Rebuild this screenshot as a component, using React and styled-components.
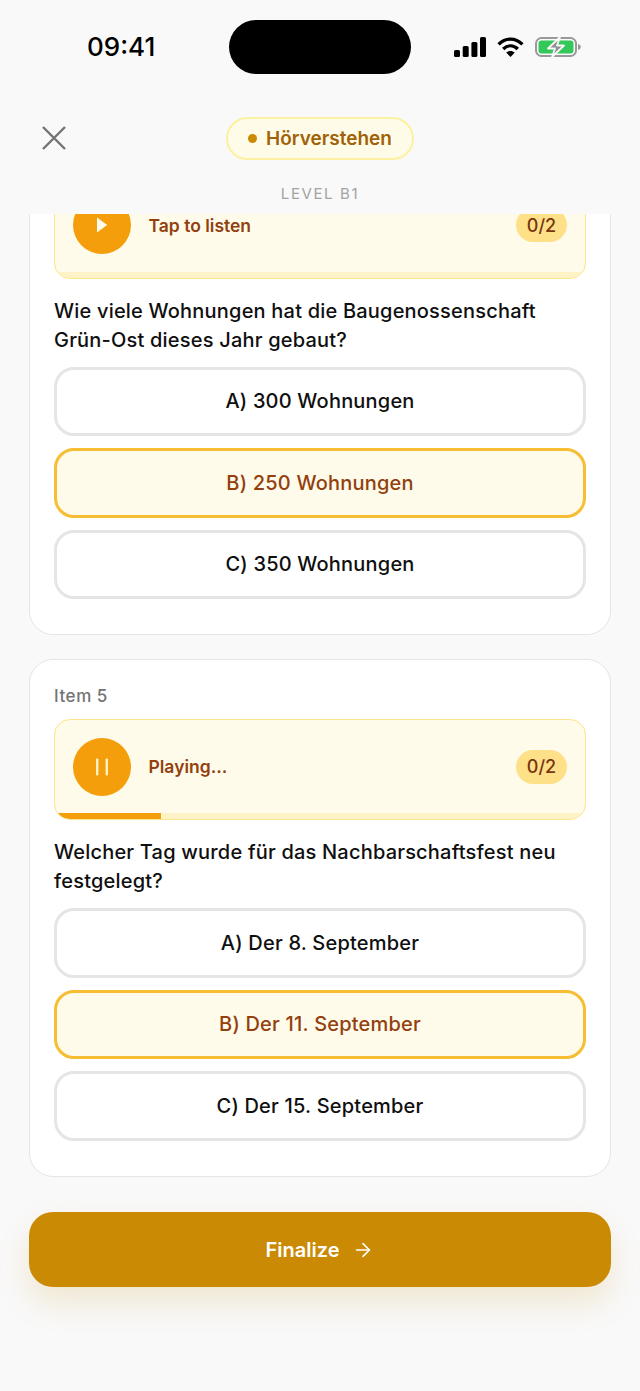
import React, { useLayoutEffect, useRef } from 'react';
import styled, { createGlobalStyle } from 'styled-components';
import { ArrowRight } from 'lucide-react';

const GlobalStyle = createGlobalStyle`
  html, body {
    margin: 0;
    padding: 0;
    background: #f9f9f9;
  }
  * {
    box-sizing: border-box;
  }
`;

const items = [
  {
    label: 'Item 4',
    status: 'Tap to listen',
    playing: false,
    progress: 0,
    question: 'Wie viele Wohnungen hat die Baugenossenschaft Grün-Ost dieses Jahr gebaut?',
    options: ['A) 300 Wohnungen', 'B) 250 Wohnungen', 'C) 350 Wohnungen'],
    selected: 1,
  },
  {
    label: 'Item 5',
    status: 'Playing...',
    playing: true,
    progress: 20,
    question: 'Welcher Tag wurde für das Nachbarschaftsfest neu festgelegt?',
    options: ['A) Der 8. September', 'B) Der 11. September', 'C) Der 15. September'],
    selected: 1,
  },
];

const App = () => {
  const listRef = useRef(null);

  // the reference is photographed part way down the list
  useLayoutEffect(() => {
    listRef.current.scrollTop = 97;
  }, []);

  return (
    <Screen>
      <GlobalStyle />
      <Header>
        <StatusBar>
          <Time>09:41</Time>
          <Island />
          <StatusIcons>
            <svg width="32" height="20" viewBox="0 0 32 20">
              <rect x="0" y="13" width="6" height="7" rx="1.5" fill="#000" />
              <rect x="8.7" y="9" width="6" height="11" rx="1.5" fill="#000" />
              <rect x="17.4" y="5" width="6" height="15" rx="1.5" fill="#000" />
              <rect x="26" y="0" width="6" height="20" rx="1.5" fill="#000" />
            </svg>
            <svg width="27" height="20" viewBox="0 0 27 20" fill="none" stroke="#000" strokeWidth="3.4">
              <path d="M1.6 7.4C8.6 0.4 18.4 0.4 25.4 7.4" />
              <path d="M6.2 12C10.6 7.8 16.4 7.8 20.8 12" />
              <path d="M13.5 20L9.2 15.6C11.6 13.4 15.4 13.4 17.8 15.6Z" fill="#000" stroke="none" />
            </svg>
            <svg width="46" height="22" viewBox="0 0 46 22" fill="none">
              <rect x="1" y="2" width="40" height="18" rx="5.5" stroke="#9a9a9e" strokeWidth="2" />
              <rect x="3.5" y="4.5" width="35" height="13" rx="3" fill="#34c759" />
              <path d="M43 8C45 8.6 45.8 9.6 45.8 11C45.8 12.4 45 13.4 43 14Z" fill="#9a9a9e" />
              <path
                d="M25 1L13 12.5H20L17 21L29 9.5H22Z"
                fill="#8e8e93"
                stroke="#f9f9f9"
                strokeWidth="1.8"
                strokeLinejoin="round"
              />
            </svg>
          </StatusIcons>
        </StatusBar>
        <NavRow>
          <CloseButton aria-label="Close">
            <svg width="24" height="24" viewBox="0 0 24 24" fill="none" stroke="#737373" strokeWidth="2.4">
              <path d="M1 1L23 23M23 1L1 23" />
            </svg>
          </CloseButton>
          <SkillPill>
            <PillDot />
            Hörverstehen
          </SkillPill>
        </NavRow>
        <Level>LEVEL B1</Level>
      </Header>
      <List ref={listRef}>
        {items.map((item) => (
          <Card key={item.label}>
            <ItemLabel>{item.label}</ItemLabel>
            <Player>
              <PlayerRow>
                <RoundButton>
                  {item.playing ? (
                    <svg width="14" height="18" viewBox="0 0 14 18" fill="#fef3c7">
                      <rect x="1" y="0.5" width="2.4" height="17" rx="1" />
                      <rect x="10.6" y="0.5" width="2.4" height="17" rx="1" />
                    </svg>
                  ) : (
                    <svg width="14" height="18" viewBox="0 0 14 18" fill="#fffbeb">
                      <path d="M2 1.5L12.2 9L2 16.5Z" />
                    </svg>
                  )}
                </RoundButton>
                <StatusText>{item.status}</StatusText>
                <Count>0/2</Count>
              </PlayerRow>
              <Track>
                <TrackFill style={{ width: `${item.progress}%` }} />
              </Track>
            </Player>
            <Question>{item.question}</Question>
            <Options>
              {item.options.map((option, i) => (
                <Option key={option} $selected={i === item.selected}>
                  {option}
                </Option>
              ))}
            </Options>
          </Card>
        ))}
        <FinalizeButton>
          Finalize
          <ArrowRight size={22} strokeWidth={1.75} />
        </FinalizeButton>
      </List>
    </Screen>
  );
};

const Screen = styled.div`
  height: 1391px;
  width: 640px;
  display: flex;
  flex-direction: column;
  background: #f9f9f9;
  font-family: 'Inter', 'Liberation Sans', sans-serif;
  overflow: hidden;
`;

const Header = styled.header`
  flex: 0 0 214px;
  background: #f9f9f9;
  display: flex;
  flex-direction: column;
  align-items: center;
`;

const StatusBar = styled.div`
  width: 100%;
  height: 117px;
  padding: 20px 59px 0;
  display: grid;
  grid-template-columns: 1fr 182px 1fr;
  align-items: start;
`;

const Time = styled.span`
  margin: 11px 0 0 28px;
  font-size: 26px;
  line-height: 32px;
  font-weight: 500;
  color: #000;
  white-space: nowrap;
`;

const Island = styled.div`
  height: 54px;
  border-radius: 27px;
  background: #000;
`;

const StatusIcons = styled.div`
  margin-top: 16px;
  display: flex;
  align-items: center;
  justify-content: flex-end;
  gap: 11px;
`;

const NavRow = styled.div`
  position: relative;
  width: 100%;
  display: flex;
  justify-content: center;
`;

const CloseButton = styled.button`
  position: absolute;
  left: 42px;
  top: 9px;
  width: 24px;
  height: 24px;
  padding: 0;
  border: none;
  background: none;
  display: flex;
`;

const SkillPill = styled.div`
  height: 43px;
  padding: 0 20px;
  display: flex;
  align-items: center;
  gap: 9px;
  border-radius: 22px;
  border: 2px solid #fdf0a0;
  background: #fefce8;
  color: #a16207;
  font-size: 19px;
  font-weight: 600;
`;

const PillDot = styled.span`
  width: 9px;
  height: 9px;
  border-radius: 50%;
  background: #ca8a04;
`;

const Level = styled.div`
  margin-top: 25px;
  font-size: 15px;
  line-height: 18px;
  letter-spacing: 1.6px;
  color: #a3a3a3;
`;

const List = styled.main`
  flex: 1;
  min-height: 0;
  overflow-y: auto;
  scrollbar-width: none;
  padding: 0.5px 29px 104px;
  display: flex;
  flex-direction: column;
  gap: 24px;
`;

const Card = styled.section`
  flex: none;
  padding: 24px 24px 35px;
  background: #fff;
  border: 1px solid #e5e5e5;
  border-radius: 24px;
`;

const ItemLabel = styled.div`
  font-size: 17px;
  line-height: 24px;
  font-weight: 500;
  letter-spacing: 0.55px;
  color: #737373;
  margin-bottom: 11px;
`;

const Player = styled.div`
  height: 101px;
  display: flex;
  flex-direction: column;
  background: #fffbeb;
  border: 1px solid #fce58a;
  border-radius: 16px;
  overflow: hidden;
`;

const PlayerRow = styled.div`
  flex: 1;
  padding: 0 18px;
  display: flex;
  align-items: center;
  gap: 17.5px;
`;

const RoundButton = styled.div`
  width: 58px;
  height: 58px;
  border-radius: 50%;
  background: #f59e0b;
  display: flex;
  align-items: center;
  justify-content: center;
`;

const StatusText = styled.span`
  flex: 1;
  font-size: 17.5px;
  font-weight: 600;
  color: #92400e;
`;

const Count = styled.span`
  width: 51px;
  height: 34px;
  border-radius: 17px;
  background: #fde087;
  color: #78350f;
  font-size: 18px;
  font-weight: 500;
  display: flex;
  align-items: center;
  justify-content: center;
`;

const Track = styled.div`
  height: 6px;
  background: #fef3c7;
`;

const TrackFill = styled.div`
  height: 100%;
  background: #f59e0b;
`;

const Question = styled.p`
  margin: 18px 0 12px;
  font-size: 20px;
  line-height: 29px;
  font-weight: 500;
  letter-spacing: 0.2px;
  color: #0f0f0f;
`;

const Options = styled.div`
  display: flex;
  flex-direction: column;
  gap: 12px;
`;

const Option = styled.button`
  height: 69.5px;
  border-radius: 20px;
  border: 3px solid ${(p) => (p.$selected ? '#f7bd33' : '#e5e5e5')};
  background: ${(p) => (p.$selected ? '#fffbeb' : '#fff')};
  color: ${(p) => (p.$selected ? '#92400e' : '#0f0f0f')};
  font-family: inherit;
  font-size: 20px;
  font-weight: 500;
  letter-spacing: 0.2px;
`;

const FinalizeButton = styled.button`
  flex: none;
  height: 75px;
  margin-top: 11.5px;
  padding-bottom: 1px;
  border: none;
  border-radius: 24px;
  background: #ca8a04;
  box-shadow: 0 16px 32px rgba(202, 138, 4, 0.16);
  color: #fff;
  font-family: inherit;
  font-size: 20px;
  font-weight: 600;
  display: flex;
  align-items: center;
  justify-content: center;
  gap: 13px;
`;

export default App;
